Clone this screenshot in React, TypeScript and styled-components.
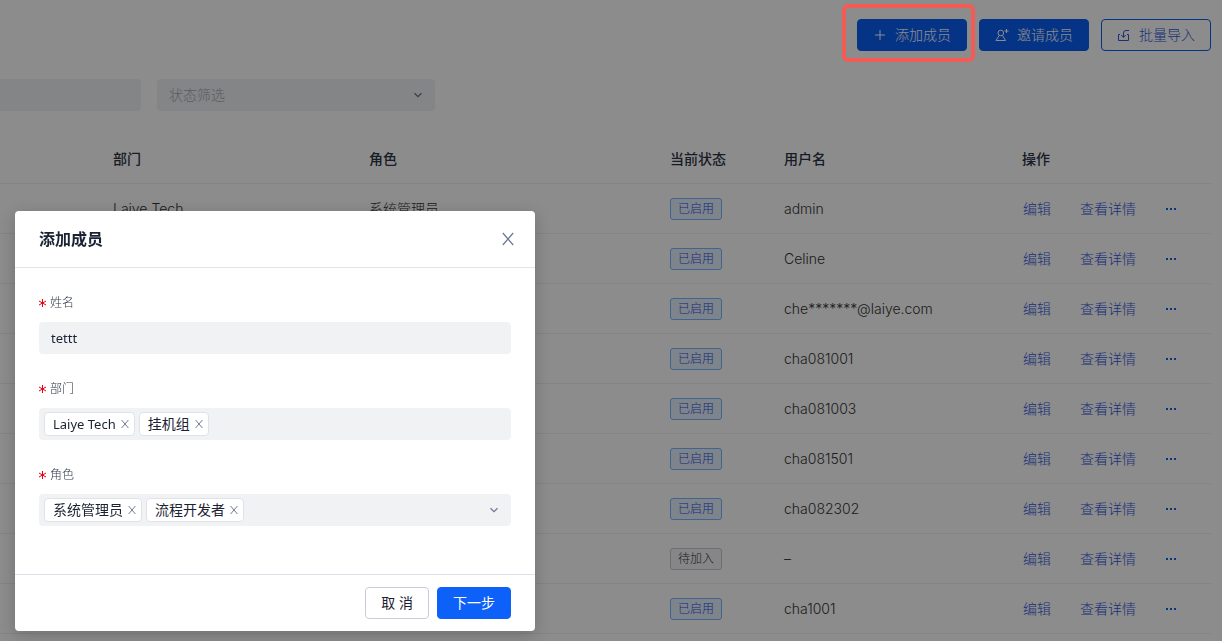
import React from "react";
import styled, { createGlobalStyle, css } from "styled-components";

const GlobalStyle = createGlobalStyle`
  *, *::before, *::after { box-sizing: border-box; }
  body {
    margin: 0;
    overflow: hidden;
    background: #fff;
    color: #1a2233;
    font-family: Inter, "Noto Sans CJK SC", sans-serif;
    font-size: 14px;
    line-height: 22px;
  }
  button, input, select { font: inherit; color: inherit; }
  button { cursor: pointer; }
  svg { display: block; flex: none; }
`;

const Page = styled.main`
  min-height: 100vh;
  padding: 19px 11px 0 0;
`;

const Toolbar = styled.div`
  display: flex;
  justify-content: flex-end;
  gap: 12px;
`;

const ActionButton = styled.button<{ $outline?: boolean }>`
  display: flex;
  align-items: center;
  justify-content: center;
  gap: 8px;
  width: 110px;
  height: 32px;
  padding: 0;
  border: 1px solid #0a5ff5;
  border-radius: 4px;
  font-weight: 300;
  white-space: nowrap;
  ${({ $outline }) =>
    $outline
      ? css`
          background: #fff;
          color: #2f56dc;
        `
      : css`
          background: #0a5ff5;
          color: #fff;
        `}
`;

const Highlighted = styled.div`
  position: relative;
`;

const HighlightRing = styled.span`
  position: absolute;
  z-index: 20;
  inset: -15px -8px -11px -15px;
  border: 4px solid #f25c54;
  border-radius: 6px;
  pointer-events: none;
`;

const Filters = styled.div`
  display: flex;
  gap: 16px;
  margin-top: 28px;
`;

const SearchInput = styled.input`
  width: 141px;
  height: 32px;
  padding: 0 12px;
  border: 0;
  border-radius: 0 4px 4px 0;
  background: #f1f2f5;
`;

const StatusFilter = styled.div`
  display: flex;
  align-items: center;
  position: relative;
  width: 278px;
  color: #6a7286;

  select {
    width: 100%;
    height: 32px;
    padding: 0 32px 0 12px;
    border: 0;
    border-radius: 4px;
    appearance: none;
    background: #f1f2f5;
    color: #a3a7b3;
    font-weight: 300;
  }
  svg {
    position: absolute;
    right: 12px;
    pointer-events: none;
  }
`;

const MemberTable = styled.table`
  width: 100%;
  margin-top: 23px;
  border-spacing: 0;
  table-layout: fixed;
`;

const Col = styled.col<{ $width?: number }>`
  width: ${({ $width }) => ($width ? `${$width}px` : "auto")};
`;

const HeadCell = styled.th`
  height: 50px;
  padding: 0 16px;
  border-bottom: 1px solid #f0f0f2;
  font-weight: 500;
  text-align: left;
  color: #2c3347;
`;

const Cell = styled.td`
  height: 50px;
  padding: 0 16px;
  border-bottom: 1px solid #f0f0f2;
  font-weight: 300;
  color: #353535;
  white-space: nowrap;
`;

const StatusTag = styled.span<{ $pending: boolean }>`
  display: block;
  width: 52px;
  height: 22px;
  border: 1px solid ${({ $pending }) => ($pending ? "#c5c8d2" : "#78b4ff")};
  border-radius: 3px;
  background: ${({ $pending }) => ($pending ? "#f4f5f7" : "#e6f1ff")};
  color: ${({ $pending }) => ($pending ? "#353535" : "#2f50d8")};
  font-size: 12px;
  line-height: 20px;
  text-align: center;
`;

const RowActions = styled.div`
  display: flex;
  align-items: center;
  gap: 29px;
  padding-left: 1px;
`;

const RowLink = styled.a`
  color: #2f56dc;
  text-decoration: none;
`;

const MoreButton = styled.button`
  padding: 4px 0;
  border: 0;
  background: none;
  color: #0a5ff5;
`;

const Mask = styled.div`
  position: fixed;
  z-index: 10;
  inset: 0;
  background: rgba(0, 0, 0, 0.45);
`;

const Dialog = styled.section`
  position: absolute;
  z-index: 11;
  top: 211px;
  left: 15px;
  width: 520px;
  border-radius: 4px;
  background: #fff;
  box-shadow: 0 4px 16px rgba(0, 0, 0, 0.2);
  font-family: "Noto Sans", "Noto Sans CJK SC", sans-serif;
`;

const DialogHeader = styled.header`
  display: flex;
  align-items: center;
  justify-content: space-between;
  height: 57px;
  padding: 0 20px 0 24px;
  border-bottom: 1px solid #e3e4e8;
`;

const DialogTitle = styled.h2`
  margin: 0;
  font-size: 16px;
  font-weight: 700;
  line-height: 24px;
`;

const IconButton = styled.button`
  padding: 0;
  border: 0;
  background: none;
  color: #6f7b94;
`;

const Form = styled.form`
  display: flex;
  flex-direction: column;
  gap: 24px;
  padding: 24px 24px 48px;
`;

const Field = styled.div`
  display: flex;
  flex-direction: column;
  gap: 8px;
`;

const FieldLabel = styled.label`
  display: flex;
  align-items: center;
  gap: 3px;
  font-size: 12px;
  font-weight: 300;
  color: #2f3748;
`;

const TextInput = styled.input`
  width: 100%;
  height: 32px;
  padding: 0 12px;
  border: 0;
  border-radius: 4px;
  background: #f1f2f4;
  font-size: 13px;
`;

const TagBox = styled.div`
  display: flex;
  align-items: center;
  gap: 4px;
  height: 32px;
  padding: 0 12px 0 5px;
  border-radius: 4px;
  background: #f1f2f4;
  color: #6f7b94;
`;

const TagInput = styled.input`
  flex: 1;
  min-width: 0;
  padding: 0;
  border: 0;
  outline: 0;
  background: none;
`;

const Tag = styled.span<{ $latin: boolean }>`
  display: flex;
  align-items: center;
  gap: 5px;
  height: 24px;
  padding: 0 5px 0 8px;
  border: 1px solid #dfe2ea;
  border-radius: 4px;
  background: #fff;
  color: #1a2233;
  font-size: ${({ $latin }) => ($latin ? "13px" : "14px")};
  white-space: nowrap;
`;

const DialogFooter = styled.footer`
  display: flex;
  justify-content: flex-end;
  gap: 8px;
  padding: 12px 24px;
  border-top: 1px solid #dfe1ea;
`;

const FooterButton = styled.button<{ $primary?: boolean }>`
  height: 32px;
  padding: 0 15px;
  border: 1px solid ${({ $primary }) => ($primary ? "#0d60f8" : "#c8cdda")};
  border-radius: 4px;
  background: ${({ $primary }) => ($primary ? "#0d60f8" : "#fff")};
  color: ${({ $primary }) => ($primary ? "#fff" : "#1a2233")};
`;

const PlusIcon = () => (
  <svg width="14" height="14" viewBox="0 0 14 14" fill="none" stroke="currentColor" aria-hidden="true">
    <path d="M7 2v10M2 7h10" />
  </svg>
);

const InviteIcon = () => (
  <svg width="14" height="14" viewBox="0 0 14 14" fill="none" stroke="currentColor" aria-hidden="true">
    <circle cx="5.8" cy="5" r="2.8" />
    <path d="M4.2 7.4 1 12.5h9.6L7.4 7.4M11.5 1v4M9.5 3h4" />
  </svg>
);

const ImportIcon = () => (
  <svg width="14" height="14" viewBox="0 0 14 14" fill="none" stroke="currentColor" aria-hidden="true">
    <path d="M3 6.5H1.5v6h10v-6H10M12 2.5H9a2.5 2.5 0 0 0-2.5 2.5v4.2M4.3 7l2.2 2.4L8.7 7" />
  </svg>
);

const ChevronIcon = () => (
  <svg width="10" height="10" viewBox="0 0 10 10" fill="none" stroke="currentColor" strokeWidth="1.3" aria-hidden="true">
    <path d="m1.5 3.2 3.5 3.4 3.5-3.4" />
  </svg>
);

const DialogCloseIcon = () => (
  <svg width="14" height="14" viewBox="0 0 14 14" fill="none" stroke="currentColor" strokeWidth="1.3" aria-hidden="true">
    <path d="M1.8 1 12.2 13M12.2 1 1.8 13" />
  </svg>
);

const TagCloseIcon = () => (
  <svg width="8" height="8" viewBox="0 0 8 8" fill="none" stroke="currentColor" aria-hidden="true">
    <path d="M.6 0l6.8 8M7.4 0 .6 8" />
  </svg>
);

const MoreIcon = () => (
  <svg width="12" height="2" viewBox="0 0 12 2" fill="currentColor" aria-hidden="true">
    <path d="M1 0h2v2H1zM5 0h2v2H5zM9 0h2v2H9z" />
  </svg>
);

interface Member {
  department?: string;
  role?: string;
  username: string;
  pending?: boolean;
}

const members: Member[] = [
  { department: "Laiye Tech", role: "系统管理员", username: "admin" },
  { username: "Celine" },
  { username: "che*******@laiye.com" },
  { username: "cha081001" },
  { username: "cha081003" },
  { username: "cha081501" },
  { username: "cha082302" },
  { username: "–", pending: true },
  { username: "cha1001" },
];

const RequiredLabel = ({ htmlFor, children }: { htmlFor: string; children: React.ReactNode }) => (
  <FieldLabel htmlFor={htmlFor}>
    <svg width="8" height="8" viewBox="0 0 8 8" fill="none" stroke="#e60012" aria-hidden="true">
      <path d="M3.5 0v8M0 2l7 4M0 6l7-4" />
    </svg>
    {children}
  </FieldLabel>
);

const Tags = ({ values }: { values: string[] }) => (
  <>
    {values.map((value) => (
      <Tag key={value} $latin={/^[\x20-\x7e]+$/.test(value)}>
        {value}
        <IconButton type="button" aria-label={`移除 ${value}`}>
          <TagCloseIcon />
        </IconButton>
      </Tag>
    ))}
  </>
);

export default function App() {
  return (
    <>
      <GlobalStyle />
      <Page>
        <Toolbar>
          <Highlighted>
            <ActionButton type="button">
              <PlusIcon />
              添加成员
            </ActionButton>
            <HighlightRing />
          </Highlighted>
          <ActionButton type="button">
            <InviteIcon />
            邀请成员
          </ActionButton>
          <ActionButton type="button" $outline>
            <ImportIcon />
            批量导入
          </ActionButton>
        </Toolbar>

        <Filters>
          <SearchInput type="text" aria-label="搜索" />
          <StatusFilter>
            <select aria-label="状态筛选" defaultValue="">
              <option value="">状态筛选</option>
              <option value="enabled">已启用</option>
              <option value="pending">待加入</option>
            </select>
            <ChevronIcon />
          </StatusFilter>
        </Filters>

        <MemberTable>
          <colgroup>
            <Col $width={97} />
            <Col $width={256} />
            <Col />
            <Col $width={114} />
            <Col $width={238} />
            <Col $width={205} />
          </colgroup>
          <thead>
            <tr>
              <HeadCell />
              <HeadCell>部门</HeadCell>
              <HeadCell>角色</HeadCell>
              <HeadCell>当前状态</HeadCell>
              <HeadCell>用户名</HeadCell>
              <HeadCell>操作</HeadCell>
            </tr>
          </thead>
          <tbody>
            {members.map((member) => (
              <tr key={member.username}>
                <Cell />
                <Cell>{member.department}</Cell>
                <Cell>{member.role}</Cell>
                <Cell>
                  <StatusTag $pending={Boolean(member.pending)}>{member.pending ? "待加入" : "已启用"}</StatusTag>
                </Cell>
                <Cell>{member.username}</Cell>
                <Cell>
                  <RowActions>
                    <RowLink href="#edit">编辑</RowLink>
                    <RowLink href="#detail">查看详情</RowLink>
                    <MoreButton type="button" aria-label="更多">
                      <MoreIcon />
                    </MoreButton>
                  </RowActions>
                </Cell>
              </tr>
            ))}
          </tbody>
        </MemberTable>
      </Page>

      <Mask />
      <Dialog role="dialog" aria-modal="true" aria-labelledby="dialog-title">
        <DialogHeader>
          <DialogTitle id="dialog-title">添加成员</DialogTitle>
          <IconButton type="button" aria-label="关闭">
            <DialogCloseIcon />
          </IconButton>
        </DialogHeader>
        <Form>
          <Field>
            <RequiredLabel htmlFor="name">姓名</RequiredLabel>
            <TextInput id="name" type="text" defaultValue="tettt" />
          </Field>
          <Field>
            <RequiredLabel htmlFor="department">部门</RequiredLabel>
            <TagBox>
              <Tags values={["Laiye Tech", "挂机组"]} />
              <TagInput id="department" type="text" />
            </TagBox>
          </Field>
          <Field>
            <RequiredLabel htmlFor="role">角色</RequiredLabel>
            <TagBox>
              <Tags values={["系统管理员", "流程开发者"]} />
              <TagInput id="role" type="text" />
              <ChevronIcon />
            </TagBox>
          </Field>
        </Form>
        <DialogFooter>
          <FooterButton type="button">取 消</FooterButton>
          <FooterButton type="button" $primary>
            下一步
          </FooterButton>
        </DialogFooter>
      </Dialog>
    </>
  );
}
